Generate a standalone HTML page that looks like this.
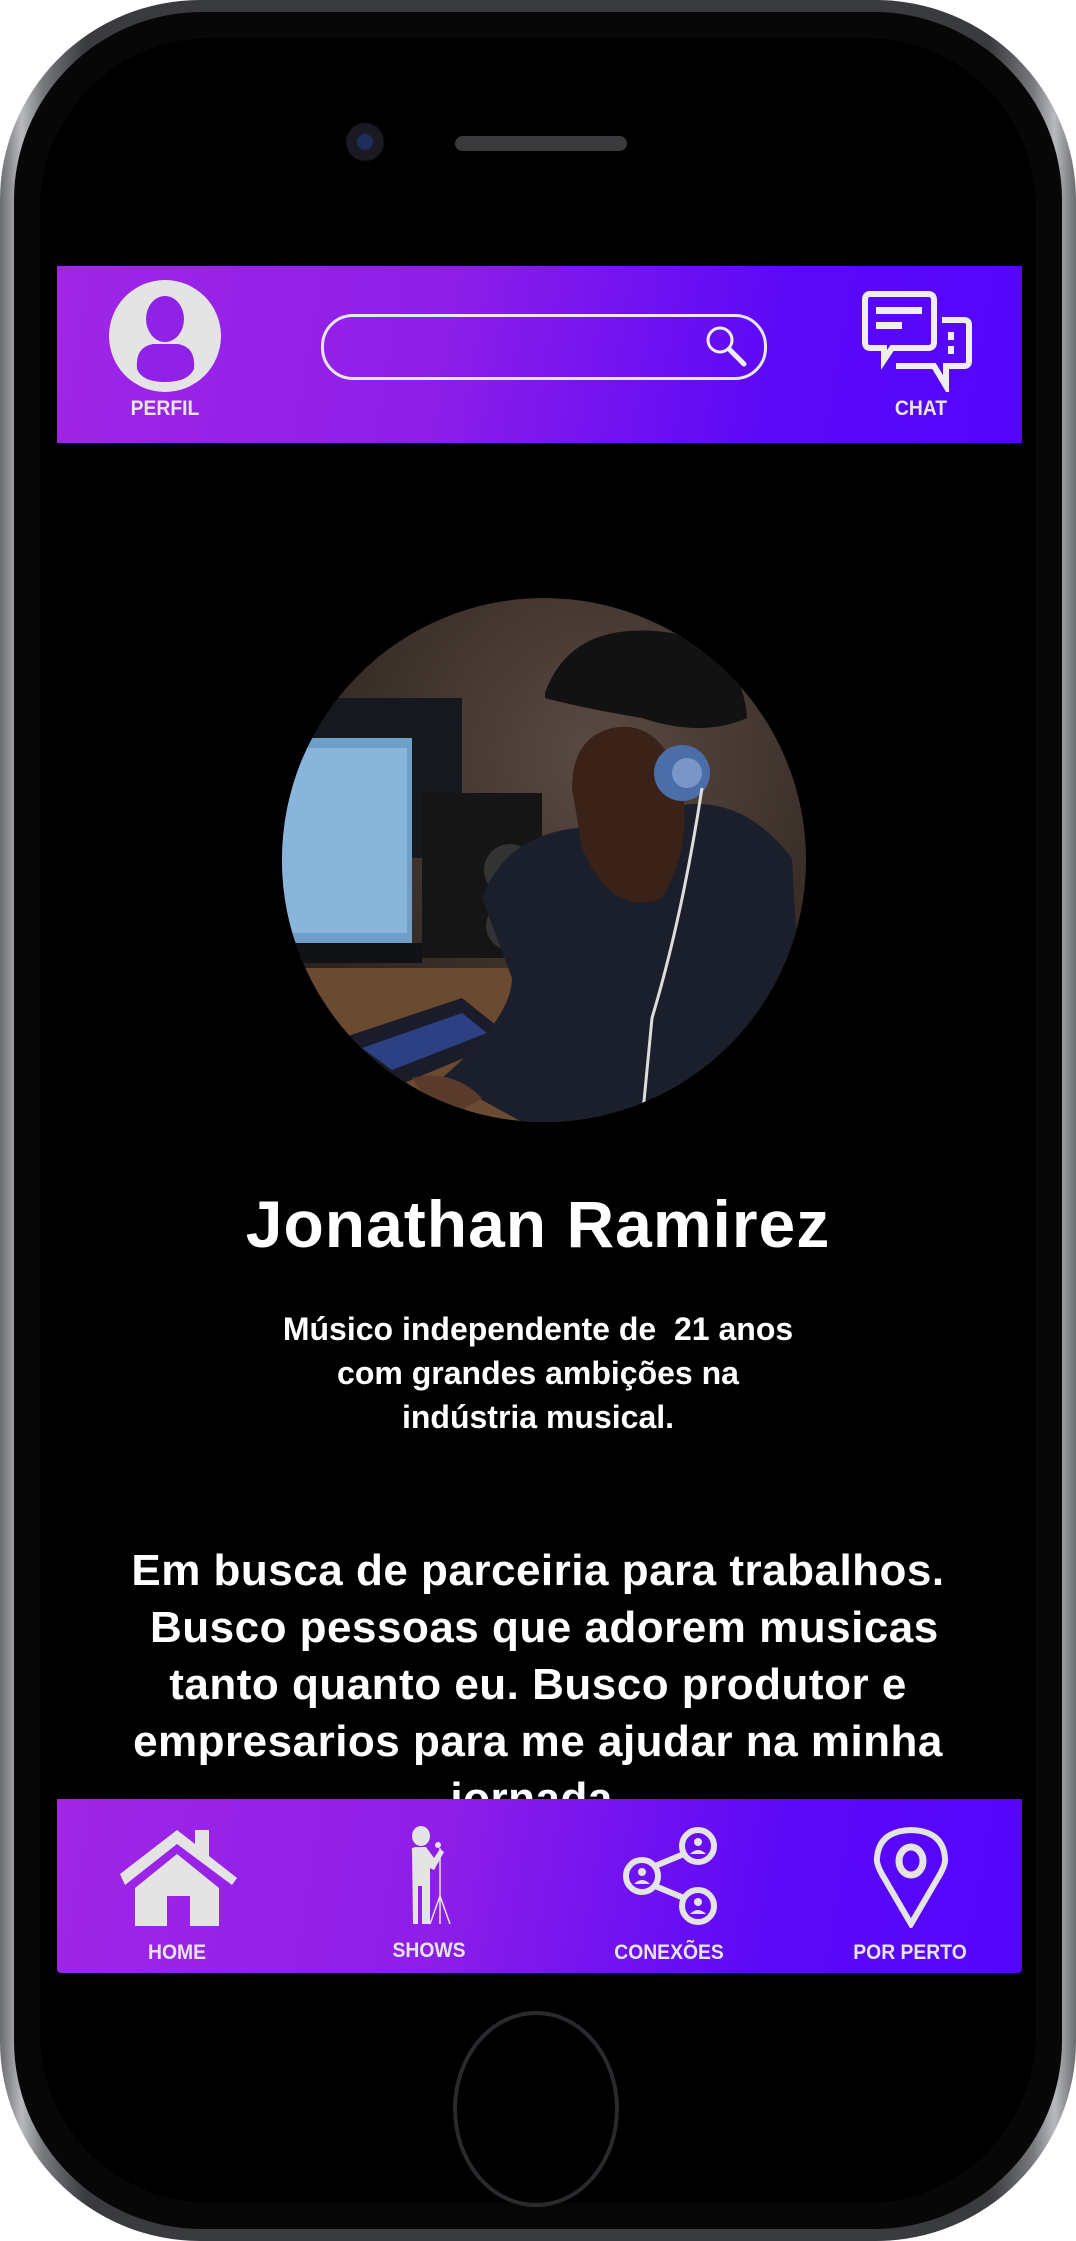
<!DOCTYPE html>
<html><head><meta charset="utf-8"><style>
html,body{margin:0;padding:0;background:#fff;}
body{width:1076px;height:2241px;position:relative;overflow:hidden;font-family:"Liberation Sans","DejaVu Sans",sans-serif;}
.phone{position:absolute;left:0;top:0;width:1076px;height:2241px;border-radius:200px;background:linear-gradient(90deg,#6a6c70,#b9babd 2%,#77797d 4%,#3a3b3e 8%,#3a3b3e 92%,#77797d 96%,#b9babd 98%,#6a6c70);}
.inner{position:absolute;left:14px;top:12px;right:14px;bottom:12px;border-radius:188px;background:#070707;}
.inner2{position:absolute;left:26px;top:26px;right:26px;bottom:26px;border-radius:170px;background:#000;}
.bar{position:absolute;left:57px;width:965px;background:linear-gradient(100deg,#a026e6 0%,#8d1ee8 40%,#5a08f8 75%,#5405fb 100%);}
.lbl{position:absolute;color:#e5e5e5;font-weight:bold;font-size:21px;text-align:center;width:200px;margin-left:-100px;transform:scaleX(.92);}
.txt{position:absolute;left:0;width:1076px;text-align:center;color:#fff;font-weight:bold;}
</style></head><body>
<div class="phone"><div class="inner"><div class="inner2"></div></div></div>
<div style="position:absolute;left:347px;top:124px;width:36px;height:36px;border-radius:50%;background:#1a1a22;box-shadow:0 0 2px #444"></div>
<div style="position:absolute;left:357px;top:134px;width:16px;height:16px;border-radius:50%;background:#1e2e5a"></div>
<div style="position:absolute;left:455px;top:136px;width:172px;height:15px;border-radius:8px;background:#3a3a3c"></div>
<div class="bar" style="top:266px;height:177px;"></div>
<svg style="position:absolute;left:108px;top:279px" width="114" height="114" viewBox="0 0 114 114">
<circle cx="57" cy="57" r="56" fill="#e4e4e4"/>
<ellipse cx="57" cy="40" rx="19" ry="23" fill="#8f22e6"/>
<path d="M29 90 Q27 68 45 65 L70 65 Q88 68 86 90 Q80 103 57 103 Q34 103 29 90Z" fill="#8f22e6"/>
</svg>
<div class="lbl" style="left:165px;top:397px">PERFIL</div>
<div style="position:absolute;left:321px;top:314px;width:440px;height:60px;border:3px solid #e8e8e8;border-radius:32px"></div>
<svg style="position:absolute;left:700px;top:322px" width="52" height="46" viewBox="0 0 52 46"><circle cx="20" cy="18" r="12" stroke="#eee" stroke-width="3" fill="none"/><path d="M29 27 L44 42" stroke="#eee" stroke-width="5" stroke-linecap="round"/></svg>
<svg style="position:absolute;left:862px;top:290px" width="114" height="102" viewBox="0 0 114 102">
<path d="M6 4 H66 Q72 4 72 10 V52 Q72 58 66 58 H30 L22 70 V58 H8 Q3 58 3 52 V10 Q3 4 8 4Z" fill="none" stroke="#eee" stroke-width="6"/>
<rect x="14" y="17" width="46" height="7" fill="#eee"/><rect x="14" y="32" width="26" height="7" fill="#eee"/>
<path d="M80 30 H102 Q107 30 107 35 V71 Q107 76 102 76 H84 L84 96 L72 76 H34" fill="none" stroke="#eee" stroke-width="6"/>
<rect x="86" y="42" width="6" height="8" fill="#eee"/><rect x="86" y="56" width="6" height="8" fill="#eee"/>
</svg>
<div class="lbl" style="left:921px;top:397px">CHAT</div>
<svg style="position:absolute;left:282px;top:598px" width="524" height="524" viewBox="0 0 524 524">
<defs><clipPath id="c"><circle cx="262" cy="262" r="262"/></clipPath>
<radialGradient id="bg" cx="60%" cy="30%" r="70%"><stop offset="0" stop-color="#5a4a42"/><stop offset="1" stop-color="#2a201c"/></radialGradient></defs>
<g clip-path="url(#c)">
<rect width="524" height="524" fill="url(#bg)"/>
<rect x="0" y="100" width="180" height="160" fill="#15181c"/>
<rect x="0" y="140" width="130" height="205" fill="#6d9fc9"/>
<rect x="0" y="150" width="125" height="185" fill="#89b5da"/>
<rect x="0" y="345" width="140" height="20" fill="#101216"/>
<rect x="140" y="195" width="120" height="165" fill="#151515"/>
<circle cx="228" cy="272" r="26" fill="#333"/><circle cx="228" cy="328" r="24" fill="#333"/>
<rect x="0" y="370" width="320" height="160" fill="#6a4a30"/>
<path d="M60 440 L180 400 L230 440 L110 490Z" fill="#1a1c2a"/>
<path d="M80 450 L180 415 L205 435 L110 472Z" fill="#3858c0" opacity=".6"/>
<path d="M200 300 Q230 220 340 230 Q440 170 510 260 L524 524 L240 524 L160 480 Q230 420 230 380Z" fill="#1a1f2b"/>
<path d="M300 250 Q330 320 380 300 Q410 250 400 190 Q380 120 330 130 Q290 140 290 190Z" fill="#3a2218"/>
<path d="M263 95 Q290 20 390 35 Q460 50 465 120 Q420 140 360 120 Q300 110 263 100Z" fill="#121212"/>
<circle cx="400" cy="175" r="28" fill="#4c6ea8"/><circle cx="405" cy="175" r="15" fill="#7a96c8"/>
<path d="M420 190 Q400 320 370 420 L360 524" stroke="#ddd" stroke-width="3" fill="none"/>
<path d="M130 480 Q170 470 200 500 L160 524 Z" fill="#5a3a2a"/>
</g></svg>
<div class="txt" style="top:1186px;font-size:66px;letter-spacing:1px">Jonathan Ramirez</div>
<div class="txt" style="top:1307px;font-size:32px;line-height:44px">Músico independente de&nbsp; 21 anos<br>com grandes ambições na<br>indústria musical.</div>
<div class="txt" style="top:1542px;font-size:44px;line-height:57px;letter-spacing:.5px">Em busca de parceiria para trabalhos.<br>&nbsp;Busco pessoas que adorem musicas<br>tanto quanto eu. Busco produtor e<br>empresarios para me ajudar na minha<br>jornada.</div>
<div class="bar" style="top:1799px;height:174px;border-radius:0 0 4px 4px"></div>
<svg style="position:absolute;left:117px;top:1828px" width="122" height="100" viewBox="0 0 122 100">
<path d="M3 46 L60 2 L78 16 V2 H92 V28 L120 50 L115 57 L60 16 L8 57Z" fill="#e4e4e4"/>
<path d="M18 60 L60 26 L102 60 V98 H73 V68 H50 V98 H18Z" fill="#e4e4e4"/>
</svg>
<div class="lbl" style="left:177px;top:1941px">HOME</div>
<svg style="position:absolute;left:404px;top:1826px" width="52" height="100" viewBox="0 0 52 100">
<ellipse cx="17" cy="10" rx="9" ry="10" fill="#e4e4e4"/>
<path d="M8 24 Q6 22 12 21 L22 21 L30 32 L36 23 L40 26 L30 44 L26 42 V98 H18 V60 H14 V98 H9 Z" fill="#e4e4e4"/>
<circle cx="34" cy="19" r="3" fill="#e4e4e4"/>
<path d="M36 22 V70 M36 70 L26 98 M36 70 L46 98 M36 70 V98" stroke="#e4e4e4" stroke-width="1.5"/>
</svg>
<div class="lbl" style="left:429px;top:1939px">SHOWS</div>
<svg style="position:absolute;left:620px;top:1826px" width="100" height="100" viewBox="0 0 100 100">
<g fill="none" stroke="#e4e4e4" stroke-width="6">
<circle cx="78" cy="20" r="16"/><circle cx="22" cy="50" r="16"/><circle cx="78" cy="80" r="16"/>
<path d="M35 40 L64 28 M35 60 L64 72"/></g>
<g fill="#e4e4e4"><circle cx="78" cy="16" r="4"/><circle cx="22" cy="46" r="4"/><circle cx="78" cy="76" r="4"/>
<path d="M70 28 Q78 20 86 28Z M14 58 Q22 50 30 58Z M70 88 Q78 80 86 88Z"/></g>
</svg>
<div class="lbl" style="left:669px;top:1941px">CONEXÕES</div>
<svg style="position:absolute;left:873px;top:1826px" width="76" height="102" viewBox="0 0 76 102">
<path d="M38 98 L10 50 Q3 38 4 32 Q6 5 38 4 Q70 5 72 32 Q73 38 66 50Z" fill="none" stroke="#e4e4e4" stroke-width="6"/>
<ellipse cx="38" cy="35" rx="12" ry="14" fill="none" stroke="#e4e4e4" stroke-width="7"/>
</svg>
<div class="lbl" style="left:910px;top:1941px">POR PERTO</div>
<div style="position:absolute;left:453px;top:2011px;width:166px;height:196px;border-radius:50%;border:4px solid #2a2a2e;box-sizing:border-box"></div>
</body></html>
